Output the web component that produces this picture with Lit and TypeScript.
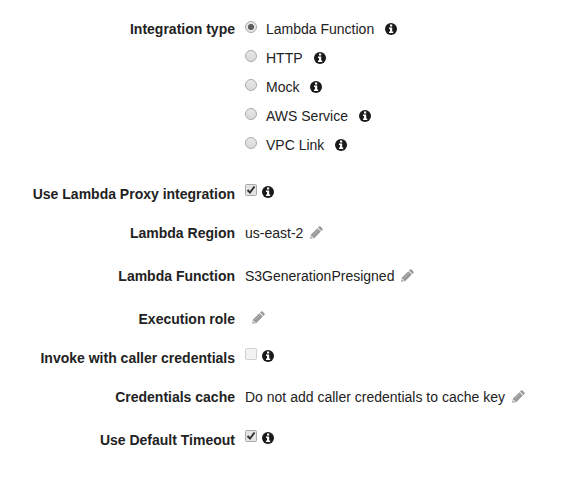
import { LitElement, html, css, svg } from "lit";
import { customElement } from "lit/decorators.js";

const info = html`<svg class="info" width="12" height="12" viewBox="0 0 12 12"><circle cx="6" cy="6" r="6" fill="#1a1a1a"/><path d="M5 1.500h2.200v2H5zM4 4.500h3.200v4h1V10H4V8.500h1V6H4z" fill="#fff"/></svg>`;
const pencil = html`<svg class="pencil" width="13" height="13" viewBox="0 0 13 13"><path d="M.2 12.800 1 8.600 7.400 2.200 10.800 5.600 4.400 12zM8 1.600 9 .6q.8-.7 1.600 0l1.800 1.800q.7.800 0 1.600l-1 1z" fill="#999"/><path d="M3 8.900 8 3.900" stroke="#c4c4c4" stroke-width=".7"/><path d="M1.500 9.900v1h1.200v1" stroke="#fff" stroke-width=".8" fill="none"/></svg>`;

@customElement("app-root")
export class AppRoot extends LitElement {
  static styles = css`
    :host { display: block; height: 496px; background: #fff; overflow: hidden; color: #222; font: 14px/20px "Liberation Sans", Arial, sans-serif; }
    .form { display: grid; grid-template-columns: 235px 1fr; column-gap: 10px; padding-top: 19px; grid-template-rows: 165px 39px 43px 43px 39px 39px 43px 30px; white-space: nowrap; }
    .label { text-align: right; font-weight: 700; }
    .value { display: flex; align-items: flex-start; }
    .options { display: flex; flex-direction: column; }
    .option { display: flex; height: 29px; }
    .radio { box-sizing: border-box; width: 12px; height: 12px; border: 1px solid #aaa; border-radius: 50%; background: linear-gradient(#e8e8e8, #d9d9d9); margin: 2px 9px 0 0; }
    .radio.on { background: radial-gradient(circle, #606060 0 2.700px, #e6e6e6 3.500px); }
    .info { margin: 4px 0 0 11px; }
    .pencil { margin: 3px 0 0 7px; }
    .pencil:first-child { margin-top: 2px; }
    .check { width: 12px; height: 12px; }
    .check + .info { margin: 2px 0 0 5px; }
  `;
  render() {
    const names = ["Lambda Function", "HTTP", "Mock", "AWS Service", "VPC Link"];
    const check = (on: boolean) => html`<svg class="check" viewBox="0 0 12 12"><rect x=".5" y=".5" width="11" height="11" rx="1" fill=${on ? "#e4e4e4" : "#f2f2f2"} stroke=${on ? "#aaa" : "#d0d0d0"}/>${on ? svg`<path d="M2.500 6 5 8.500 9.500 2.500" fill="none" stroke="#333" stroke-width="2"/>` : ""}</svg>${info}`;
    const row = (label: string, value: unknown) => html`<div class="label">${label}</div><div class="value">${value}</div>`;
    return html`<div class="form">
      <div class="label">Integration type</div>
      <div class="options">${names.map((n, i) => html`<div class="option"><span class="radio ${i ? "" : "on"}"></span><span>${n}</span>${info}</div>`)}</div>
      ${row("Use Lambda Proxy integration", check(true))}
      ${row("Lambda Region", html`<span>us-east-2</span>${pencil}`)}
      ${row("Lambda Function", html`<span>S3GenerationPresigned</span>${pencil}`)}
      ${row("Execution role", pencil)}
      ${row("Invoke with caller credentials", check(false))}
      ${row("Credentials cache", html`<span>Do not add caller credentials to cache key</span>${pencil}`)}
      ${row("Use Default Timeout", check(true))}
    </div>`;
  }
}
